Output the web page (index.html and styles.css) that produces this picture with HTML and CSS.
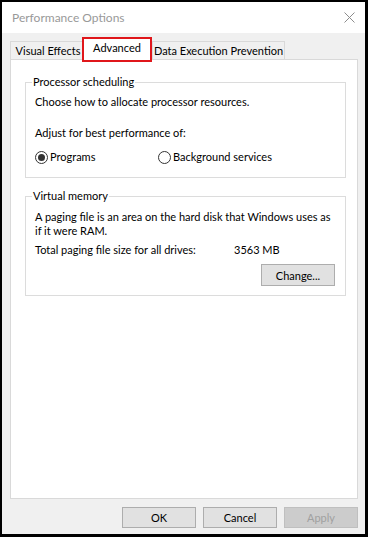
FILE: index.html
```html
<!DOCTYPE html>
<html>
<head>
<meta charset="utf-8">
<link rel="stylesheet" href="styles.css">
</head>
<body>
<div class="window">
  <div class="titlebar">
    <span class="title">Performance Options</span>
    <svg class="close" width="11" height="11" viewBox="0 0 11 11"><path d="M0.5 0.5 L10.5 10.5 M10.5 0.5 L0.5 10.5" stroke="#8c8c8c" stroke-width="1" fill="none"/></svg>
  </div>
  <div class="content">
    <div class="tabs">
      <div class="tab tab-visual">Visual Effects</div>
      <div class="tab tab-active">Advanced</div>
      <div class="tab tab-dep">Data Execution Prevention</div>
    </div>
    <div class="panel">
      <fieldset class="group group-cpu">
        <legend>Processor scheduling</legend>
        <p class="line first">Choose how to allocate processor resources.</p>
        <p class="line adjust">Adjust for best performance of:</p>
        <div class="radios">
          <label class="radio radio1"><span class="dot checked"></span>Programs</label>
          <label class="radio"><span class="dot"></span>Background services</label>
        </div>
      </fieldset>
      <fieldset class="group group-vm">
        <legend>Virtual memory</legend>
        <p class="line first vm-first">A paging file is an area on the hard disk that Windows uses as<br>if it were RAM.</p>
        <div class="line total"><span class="total-label">Total paging file size for all drives:</span><span>3563 MB</span></div>
        <div class="change-row"><button class="btn">Change...</button></div>
      </fieldset>
    </div>
    <div class="footer">
      <button class="btn">OK</button>
      <button class="btn">Cancel</button>
      <button class="btn btn-disabled">Apply</button>
    </div>
  </div>
</div>
</body>
</html>
```

FILE: styles.css
```css
* { box-sizing: border-box; }
html, body { margin: 0; padding: 0; background: #000; }
body { font-family: Lato, "Liberation Sans", sans-serif; font-size: 11px; line-height: 14px; color: #000; }
.window {
  width: 368px; height: 537px;
  border-left: 2px solid #000; border-top: 2px solid #000;
  border-right: 3px solid #000; border-bottom: 3px solid #000;
  display: flex; flex-direction: column;
  background: #f0f0f0;
}
.titlebar {
  height: 31px; flex: none; background: #fff;
  display: flex; align-items: center; justify-content: space-between;
  padding: 0 10px 0 10px;
}
.title { color: #999; font-size: 12px; }
.content { flex: 1; display: flex; flex-direction: column; padding: 4px 7px 6px 8px; }
.tabs { display: flex; align-items: flex-end; height: 22px; flex: none; position: relative; z-index: 1; white-space: nowrap; }
.tab {
  height: 18px; display: flex; align-items: center; justify-content: center;
  background: #f0f0f0; border: 1px solid #d9d9d9; border-bottom: none;
}
.tab-visual { width: 73px; padding-left: 3px; }
.tab-active {
  width: 70px; height: 25px; margin-left: -1px; margin-bottom: -3px;
  background: #fff; border: 2px solid #e0171b; padding-bottom: 3px;
  position: relative; z-index: 2;
}
.tab-dep { width: 133px; }
.panel {
  height: 440px; flex: none; background: #fff; border: 1px solid #d9d9d9;
  padding: 15px 11px 0 14px;
}
.group {
  border: 1px solid #dcdcdc; margin: 0; padding: 0 10px 13px 9px; min-width: 0;
}
.group legend { padding: 0 1px; margin-left: -3px; line-height: 14px; }
.line { margin: 0; white-space: nowrap; }
.first { margin-top: 6px; }
.vm-first { margin-top: 7px; }
.adjust { margin-top: 17px; }
.radios { display: flex; margin-top: 10px; height: 14px; }
.radio { display: flex; align-items: center; }
.radio1 { width: 123px; }
.dot {
  width: 13px; height: 13px; border: 1px solid #333; border-radius: 50%;
  margin-right: 2px; display: inline-flex; align-items: center; justify-content: center; background: #fff;
}
.dot.checked::after { content: ""; width: 7px; height: 7px; border-radius: 50%; background: #333; }
.group-vm { margin-top: 11px; padding-bottom: 9px; }
.total { margin-top: 5px; display: flex; }
.total-label { width: 199px; }
.change-row { display: flex; justify-content: flex-end; margin-top: 7px; }
.btn {
  font-family: inherit; font-size: 11px; color: #000;
  width: 74px; height: 22px; background: #e1e1e1; border: 1px solid #adadad;
  padding: 0;
}
.footer { display: flex; justify-content: flex-end; gap: 7px; margin-top: 8px; flex: none; }
.footer .btn { height: 21px; }
.btn-disabled { color: #a0a0a0; background: #cccccc; border-color: #bfbfbf; }
```
